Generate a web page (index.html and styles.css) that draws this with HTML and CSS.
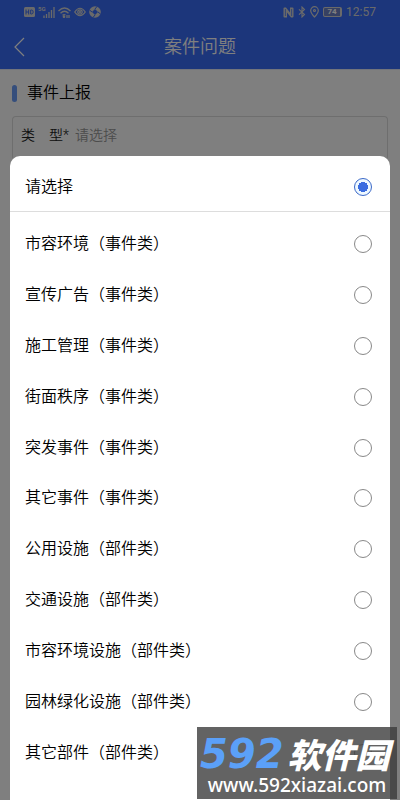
FILE: index.html
```html
<!DOCTYPE html>
<html lang="zh-CN">
<head>
<meta charset="utf-8">
<meta name="viewport" content="width=device-width, initial-scale=1">
<title>案件问题</title>
<link rel="stylesheet" href="styles.css">
</head>
<body>
<div class="page">
  <header class="top">
    <div class="status">
      <div class="status-group left">
        <svg width="11" height="10" viewBox="0 0 11 10"><rect width="11" height="10" rx="1.5" fill="#d5d5d5"/><path d="M2 2.500v5M4.700 2.500v5M2 5h3M6.700 3v4h.8q1.700 0 1.700-2t-1.700-2z" fill="none" stroke="#386cf6"/></svg>
        <span class="net">5G</span>
        <svg class="signal" width="12" height="11" viewBox="0 0 12 11"><path d="M1 11V8.500M3.500 11V7M6 11V5M8.500 11V3M11 11V0" stroke="#d5d5d5" stroke-width="1.300"/></svg>
        <svg width="13" height="11" viewBox="0 0 13 11" fill="none" stroke="#d5d5d5" stroke-width="1.300"><path d="M.5 4Q6.500-2 12.500 4M2.500 6.300Q6.500 2.300 10.500 6.300M4.500 8.300Q6 7 7.500 8"/><circle cx="6" cy="9.700" r=".7"/><path d="M9 8v3M11 8v3"/></svg>
        <svg width="12" height="10" viewBox="0 0 12 10" fill="none" stroke="#d5d5d5" stroke-width="1.200"><path d="M.7 5Q6-2.500 11.300 5 6 12.500.7 5z"/><circle cx="6" cy="5" r="2.200"/><circle cx="6" cy="5" r=".5"/></svg>
        <svg width="12" height="12" viewBox="0 0 12 12"><circle cx="6" cy="6" r="5.800" fill="#d5d5d5"/><path d="M6 3 9 6 6 9 3 6z" fill="#386cf6"/><path d="M6 3 8 .5M9 6l2.500 2M6 9l-2 2.500M3 6 .5 4" stroke="#386cf6"/></svg>
      </div>
      <div class="status-group">
        <svg width="11" height="11" viewBox="0 0 11 11"><path d="M.5 1.500Q.5.500 1.500.5H3l4 5V.5h2.500q1 0 1 1v8q0 1-1 1H8l-4-5v5H1.500q-1 0-1-1z" fill="#d5d5d5"/><path d="M2.400 2v7M8.600 2v7" stroke="#386cf6" stroke-width=".7"/></svg>
        <svg width="8" height="12" viewBox="0 0 8 12" fill="none" stroke="#d5d5d5" stroke-width="1.100"><path d="M1 3.300 6.500 8.500 4 11V1l2.500 2.500L1 8.700"/></svg>
        <svg width="9" height="12" viewBox="0 0 9 12" fill="none" stroke="#d5d5d5" stroke-width="1.200"><path d="M4.500 11Q.7 7 .7 4.500a3.800 3.800 0 0 1 7.600 0Q8.300 7 4.500 11z"/><circle cx="4.500" cy="4.500" r="1"/></svg>
        <span class="battery">74</span>
        <span class="clock">12:57</span>
      </div>
    </div>
    <div class="nav">
      <button class="back" aria-label="返回"><svg width="12" height="20" viewBox="0 0 12 20"><path d="M10 1 1 10l9 9" fill="none" stroke="#fff" stroke-width="1.200"/></svg></button>
      <h1 class="title">案件问题</h1>
    </div>
  </header>
  <main class="content">
    <h2 class="section">事件上报</h2>
    <div class="field">
      <label class="field-label" for="kind">类　型*</label>
      <input class="field-input" id="kind" type="text" placeholder="请选择" readonly>
    </div>
  </main>
</div>
<div class="mask">
  <form class="sheet">
    <label class="option first">请选择<input type="radio" name="type" checked></label>
    <div class="options">
      <label class="option">市容环境（事件类）<input type="radio" name="type"></label>
      <label class="option">宣传广告（事件类）<input type="radio" name="type"></label>
      <label class="option">施工管理（事件类）<input type="radio" name="type"></label>
      <label class="option">街面秩序（事件类）<input type="radio" name="type"></label>
      <label class="option">突发事件（事件类）<input type="radio" name="type"></label>
      <label class="option">其它事件（事件类）<input type="radio" name="type"></label>
      <label class="option">公用设施（部件类）<input type="radio" name="type"></label>
      <label class="option">交通设施（部件类）<input type="radio" name="type"></label>
      <label class="option">市容环境设施（部件类）<input type="radio" name="type"></label>
      <label class="option">园林绿化设施（部件类）<input type="radio" name="type"></label>
      <label class="option">其它部件（部件类）<input type="radio" name="type"></label>
    </div>
  </form>
</div>
<div class="watermark">
  <div class="brand"><span class="brand-num">592</span><span class="brand-name">软件园</span></div>
  <div class="site">www.592xiazai.com</div>
</div>
</body>
</html>
```
FILE: styles.css
```css
* { box-sizing: border-box; }
body {
  margin: 0;
  background: #fff;
  color: #000;
  font-family: Roboto, "Noto Sans CJK SC", sans-serif;
  font-size: 16px;
  font-weight: 350;
}
svg { display: block; flex: none; }
.top {
  background: #386cf6;
  color: #fff;
  border-bottom: 1px solid #e4e8f8;
}
.status {
  display: flex;
  justify-content: space-between;
  height: 24px;
  padding: 0 24px;
}
.status-group {
  display: flex;
  align-items: center;
  gap: 4px;
  color: #d5d5d5;
}
.left { gap: 3px; }
.net {
  align-self: flex-start;
  width: 6px;
  margin-top: 6px;
  font-size: 6px;
  line-height: 6px;
  font-weight: 700;
}
.signal { margin-left: -4px; }
.battery {
  width: 19px;
  height: 10px;
  border: 1px solid #d5d5d5;
  border-right-width: 2px;
  border-radius: 2px;
  background: #6f83c4;
  color: #fff;
  font-size: 8px;
  line-height: 8px;
  font-weight: 700;
  text-align: center;
}
.clock {
  font-size: 12px;
  line-height: 24px;
  font-weight: 400;
}
.nav {
  display: grid;
  grid-template-columns: 40px 1fr 40px;
  align-items: center;
  height: 45px;
}
.back {
  padding: 0 0 0 14px;
  border: 0;
  background: none;
}
.title {
  margin: 0;
  font-size: 18px;
  line-height: 24px;
  font-weight: inherit;
  text-align: center;
}
.content { padding: 12px; }
.section {
  display: flex;
  align-items: center;
  gap: 10px;
  margin: 0 0 12px;
  font-size: 16px;
  line-height: 22px;
  font-weight: inherit;
}
.section::before {
  content: "";
  width: 5px;
  height: 17px;
  border-radius: 3px;
  background: #6a9cf8;
}
.field {
  display: flex;
  align-items: flex-start;
  gap: 6px;
  height: 44px;
  padding: 0 8px;
  border: 1px solid #dcdcdc;
  border-bottom: 0;
  border-radius: 4px;
  font-size: 14px;
  line-height: 36px;
}
.field-label { color: #222; }
.field-input {
  flex: 1;
  min-width: 0;
  height: 36px;
  padding: 0;
  border: 0;
  background: none;
  font: inherit;
}
.field-input::placeholder { color: #999; }
.mask {
  position: absolute;
  inset: 0;
  display: flex;
  padding: 156px 10px 0;
  background: rgba(0, 0, 0, 0.5);
}
.sheet {
  flex: 1;
  display: flex;
  flex-direction: column;
  border-radius: 10px 10px 0 0;
  background: #fff;
  overflow: hidden;
}
.options {
  flex: 1;
  display: grid;
  grid-auto-rows: 1fr;
  padding: 7px 0 22px;
}
.option {
  display: flex;
  align-items: center;
  justify-content: space-between;
  padding: 0 18px 0 15px;
  line-height: 24px;
}
.first {
  padding-top: 19px;
  padding-bottom: 12px;
  border-bottom: 1px solid #ddd;
}
.option input {
  appearance: none;
  width: 18px;
  height: 18px;
  margin: 0;
  border: 1px solid #888;
  border-radius: 50%;
}
.option input:checked {
  border-color: #3a68c8;
  background: radial-gradient(circle, #3a6ce0 0 5px, #eef8ff 5px);
}
.watermark {
  position: absolute;
  right: 3px;
  bottom: 1px;
  width: 200px;
  height: 72px;
  padding-top: 6px;
  background: rgba(60, 60, 60, 0.8);
  color: #fff;
  white-space: nowrap;
}
.brand {
  display: flex;
  align-items: center;
  gap: 4px;
  height: 42px;
  padding-left: 3px;
  font-style: italic;
  font-weight: 900;
}
.brand-num {
  color: #5ba0f8;
  font-family: "DejaVu Sans", sans-serif;
  font-size: 40px;
  line-height: 40px;
}
.brand-name {
  font-family: "Noto Sans CJK SC", sans-serif;
  font-size: 34px;
  line-height: 36px;
}
.site {
  font-family: "Noto Sans", sans-serif;
  font-size: 19px;
  line-height: 20px;
  font-weight: 500;
  text-align: center;
}
```
